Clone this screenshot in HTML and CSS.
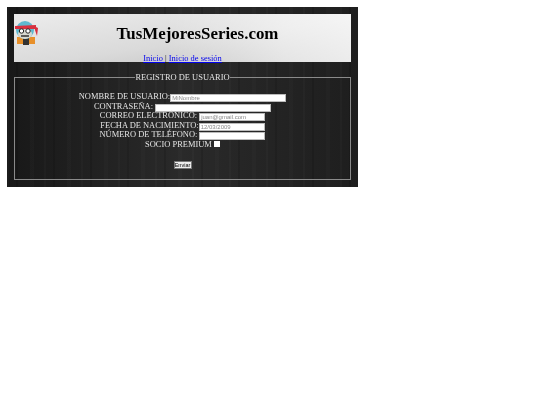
FILE: index.html
```html
<!DOCTYPE html>
<html lang="es">
<head>
<meta charset="utf-8">
<title>TusMejoresSeries.com</title>
<link rel="stylesheet" href="styles.css">
</head>
<body>
<div class="page">
  <header class="banner">
    <svg class="logo" viewBox="0 0 24 24" aria-hidden="true">
      <rect x="3" y="16" width="18" height="7" fill="#e8902a"/>
      <rect x="9" y="17" width="6" height="7" fill="#333"/>
      <circle cx="11" cy="9" r="9" fill="#5fb8cf"/>
      <ellipse cx="11" cy="13" rx="7" ry="5" fill="#d8d8d0"/>
      <path d="M1 5 L22 4 L22 8 L1 8 Z" fill="#d8303f"/>
      <path d="M20 5 L24 7 L23 15 L21 9 Z" fill="#d8303f"/>
      <circle cx="7.5" cy="10" r="2.2" fill="#fff" stroke="#222"/>
      <circle cx="14" cy="10" r="2.2" fill="#fff" stroke="#222"/>
      <path d="M7 15 H15" stroke="#333" stroke-width="1.5"/>
    </svg>
    <h1 class="title">TusMejoresSeries.com</h1>
    <nav class="nav"><a href="#">Inicio </a>| <a href="#">Inicio de sesión</a></nav>
  </header>
  <form class="form">
    <fieldset class="box">
      <legend class="legend">REGISTRO DE USUARIO</legend>
      <div class="row">NOMBRE DE USUARIO:<input class="field w-name" type="text" placeholder="MiNombre"></div>
      <div class="row">CONTRASEÑA: <input class="field w-pass" type="password"></div>
      <div class="row">CORREO ELECTRÓNICO: <input class="field w-std" type="text" placeholder="juan@gmail.com"></div>
      <div class="row">FECHA DE NACIMIENTO:<input class="field w-std" type="text" placeholder="12/03/2009"></div>
      <div class="row">NÚMERO DE TELÉFONO: <input class="field w-std" type="text"></div>
      <div class="row">SOCIO PREMIUM <span class="check"></span></div>
      <div class="submit-row"><button class="send" type="button">Enviar</button></div>
    </fieldset>
  </form>
</div>
</body>
</html>
```
FILE: styles.css
```css
html, body { margin: 0; padding: 0; background: #fff; }
body { font-family: "Liberation Serif", serif; }
.page {
  margin: 7px 0 0 7px;
  width: 337px;
  height: 166px;
  padding: 7px;
  background-color: #232323;
  background-image:
    repeating-linear-gradient(90deg, rgba(255,255,255,.02) 0 2px, transparent 2px 9px, rgba(0,0,0,.12) 9px 11px, transparent 11px 23px, rgba(255,255,255,.015) 23px 27px, transparent 27px 37px),
    linear-gradient(90deg, #181818, #2a2a2a 50%, #1e1e1e);
  color: #e4e4e4;
  filter: blur(.3px);
}
.banner {
  position: relative;
  height: 48px;
  background:
    linear-gradient(90deg, transparent 45%, rgba(255,255,255,.55) 80%, rgba(255,255,255,.7)),
    linear-gradient(172deg, #ececec, #dadada 55%, #bebebe);
  text-align: center;
}
.logo { position: absolute; left: 0; top: 7px; width: 24px; height: 24px; }
.title {
  margin: 0;
  padding: 10px 0 0 30px;
  font-size: 16.9px;
  line-height: 20px;
  font-weight: bold;
  color: #000;
}
.nav {
  margin-top: 9px;
  font-size: 8.45px;
  line-height: 10px;
  color: #222;
}
.nav a { color: #0000ee; }
.form { margin-top: 10px; }
.box {
  margin: 0;
  padding: 10px 0 0;
  height: 108px;
  box-sizing: border-box;
  border: 1px solid #8a8a8a;
  min-width: 0;
  text-align: center;
}
.legend {
  margin: 0 auto;
  padding: 0;
  font-size: 8.45px;
  line-height: 10px;
}
.row {
  font-size: 8.45px;
  line-height: 9.6px;
  height: 9.6px;
  white-space: nowrap;
}
.field {
  box-sizing: border-box;
  height: 8px;
  margin: 0;
  padding: 0 1px;
  border: 1px solid #bbb;
  border-radius: 0;
  background: #fff;
  font-family: "Liberation Sans", sans-serif;
  font-size: 6px;
  vertical-align: -1px;
}
.field::placeholder { color: #888; }
.w-name { width: 116px; }
.w-pass { width: 116px; }
.w-std { width: 66px; }
.check {
  display: inline-block;
  width: 6px;
  height: 6px;
  background: #fff;
}
.submit-row { margin-top: 8px; line-height: 8px; }
.send {
  box-sizing: border-box;
  width: 18px;
  height: 8px;
  padding: 0;
  border: 1px solid #777;
  background: #eee;
  color: #000;
  font-family: "Liberation Sans", sans-serif;
  font-size: 5.5px;
  line-height: 6px;
  display: inline-block;
}
```
